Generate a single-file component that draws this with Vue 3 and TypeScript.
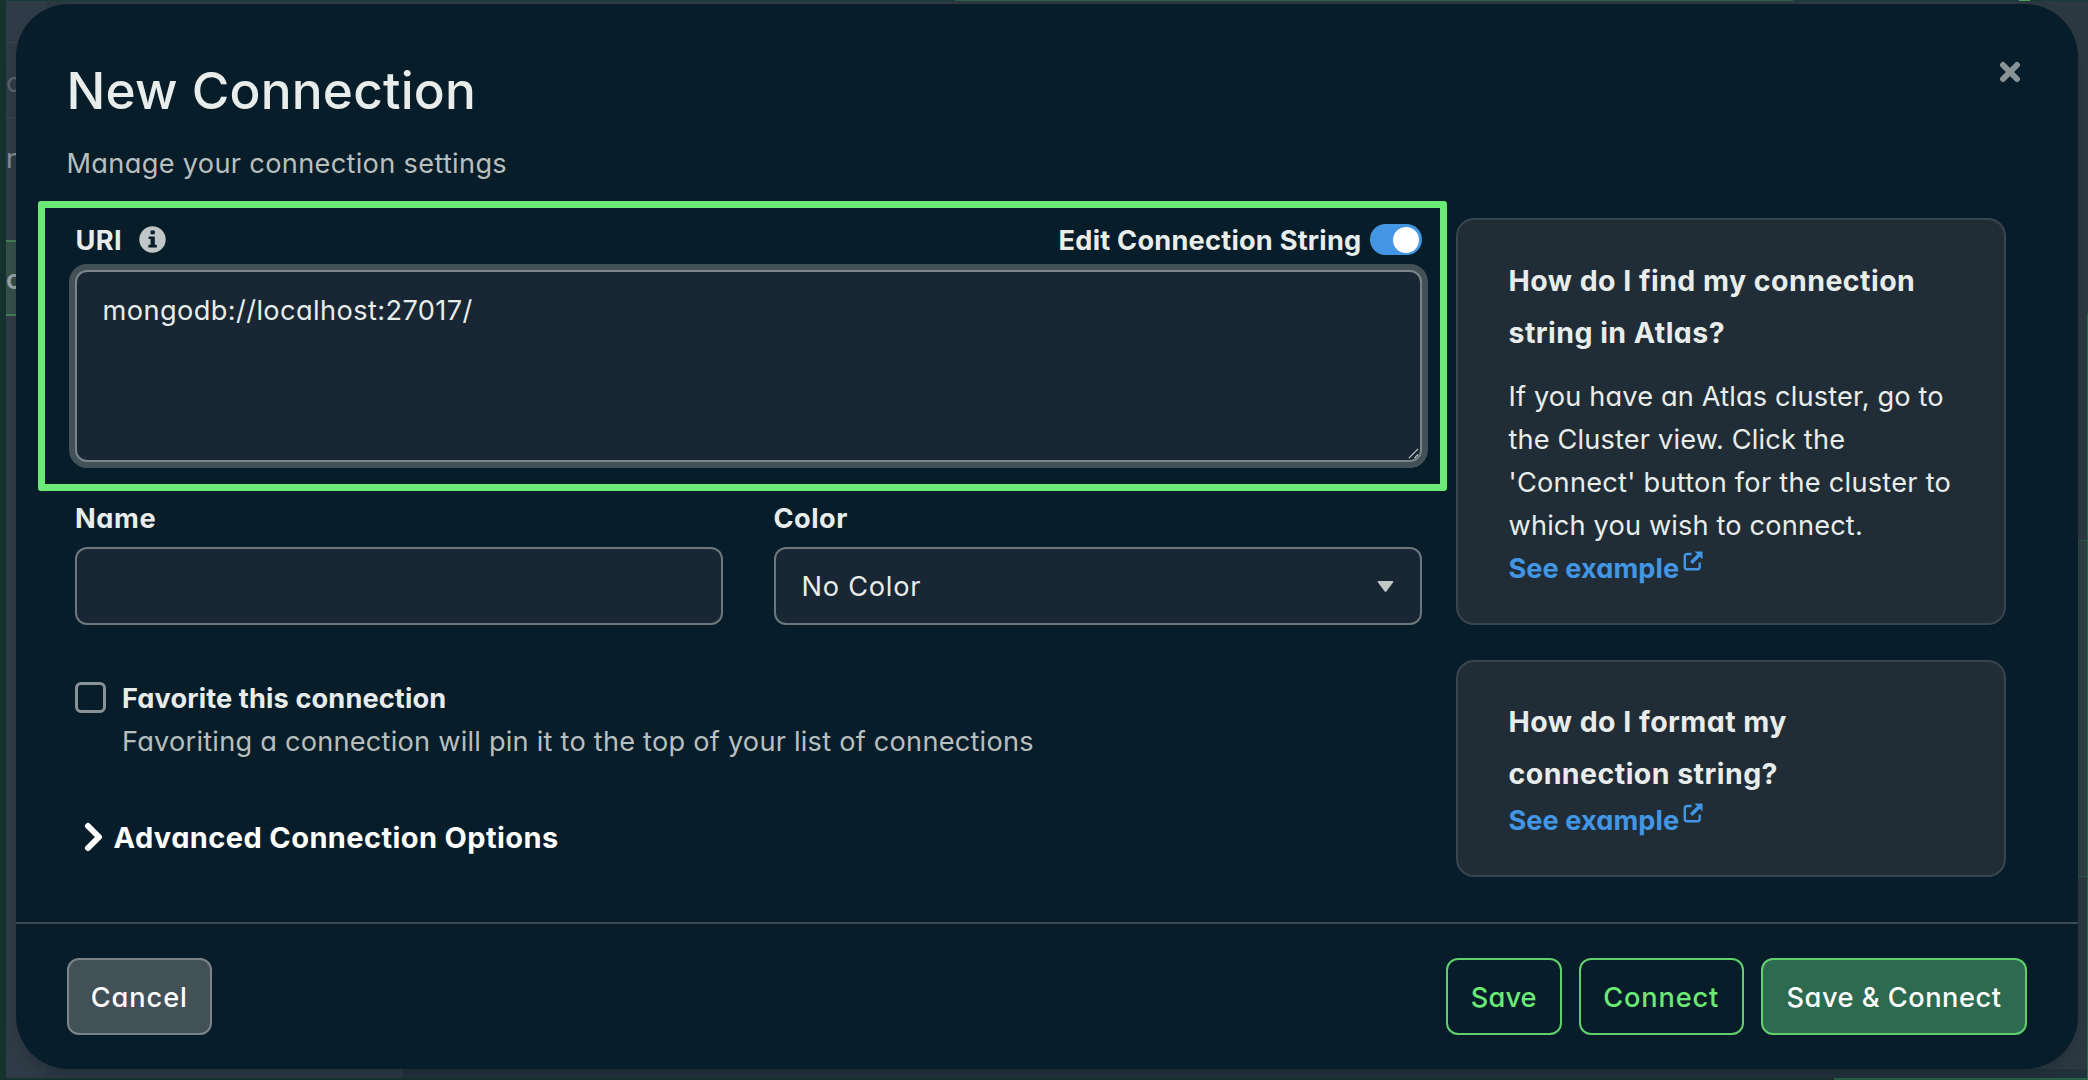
<script setup lang="ts">
const openIcon = {
  frame: 'M8.5 3H4Q1.8 3 1.8 5.2V16Q1.8 18.2 4 18.2H14.5Q16.7 18.2 16.7 16V11.5',
  arrow: 'M11.5 .5H19.5V8.5L16.8 5.8L9.5 13.1L7 10.6L14.3 3.3Z',
}
</script>

<template>
  <div class="screen">
    <div class="backdrop">
      <div class="rail"></div>
      <div class="sidebar">
        <div class="item dim top"></div>
        <div class="item dim">c</div>
        <div class="item mid">n</div>
        <div class="item active">o</div>
      </div>
      <div class="edge top-edge"></div>
      <div class="edge top-green"></div>
      <div class="edge top-mark"></div>
      <div class="edge bottom-shade"></div>
      <div class="edge bottom-edge"></div>
      <div class="edge bottom-green"></div>
      <div class="edge right-panel"></div>
      <div class="edge right-green"></div>
    </div>
    <section class="dialog">
      <header>
        <h1>New Connection</h1>
        <p class="subtitle">Manage your connection settings</p>
        <svg class="close" viewBox="0 0 22 22"><path d="M4 4L18 18M18 4L4 18" /></svg>
      </header>
      <div class="body">
        <div class="form">
          <div class="highlight">
            <div class="uri-row">
              <span class="label uri">URI</span>
              <svg class="info" viewBox="0 0 27 27"><circle cx="13.5" cy="13.5" r="13.2" /><path d="M11.6 4.6h4.2v3.6h-4.2zM9.6 10.4h6.2v8.4h2v2.6H9.4v-2.6h2.2v-5.8h-2z" /></svg>
              <span class="label edit">Edit Connection String</span>
              <span class="toggle"><i></i></span>
            </div>
            <div class="uri-box">mongodb://localhost:27017/
              <svg class="grip" viewBox="0 0 12 12"><path d="M1 11L11 1M7 11L11 7" /></svg>
            </div>
          </div>
          <div class="fields">
            <div class="field">
              <span class="label name">Name</span>
              <div class="input"></div>
            </div>
            <div class="field">
              <span class="label color">Color</span>
              <div class="input"><span class="value">No Color</span><svg class="caret" viewBox="0 0 16 11"><path d="M1 0H15Q16.5 .3 15.5 1.6L9 10.3Q8 11.4 7 10.3L.5 1.6Q-.5 .3 1 0Z" /></svg></div>
            </div>
          </div>
          <div class="favorite">
            <span class="checkbox"></span>
            <div>
              <div class="label fav">Favorite this connection</div>
              <div class="desc">Favoriting a connection will pin it to the top of your list of connections</div>
            </div>
          </div>
          <div class="advanced">
            <svg class="chevron" viewBox="0 0 20 30"><path d="M4 4L15 15L4 26" /></svg>
            <span>Advanced Connection Options</span>
          </div>
        </div>
        <aside>
          <div class="card">
            <h2>How do I find my connection<br />string in Atlas?</h2>
            <p>
              If you have an Atlas cluster, go to<br />the Cluster view. Click the<br /><span class="wide">'Connect' button for the cluster to</span><br />which you wish to connect.
            </p>
            <a><span>See example</span><svg viewBox="0 0 20 20"><path :d="openIcon.frame" /><path class="arrow" :d="openIcon.arrow" /></svg></a>
          </div>
          <div class="card second">
            <h2>How do I format my<br />connection string?</h2>
            <a><span>See example</span><svg viewBox="0 0 20 20"><path :d="openIcon.frame" /><path class="arrow" :d="openIcon.arrow" /></svg></a>
          </div>
        </aside>
      </div>
      <footer>
        <button class="cancel">Cancel</button>
        <button class="save">Save</button>
        <button class="connect">Connect</button>
        <button class="primary">Save &amp; Connect</button>
      </footer>
    </section>
  </div>
</template>

<style>
body { background: #2d3a44; }
</style>
<style scoped>
* { box-sizing: border-box; }
.screen { position: relative; width: 2088px; height: 1080px; overflow: hidden; font-family: Inter, sans-serif; font-feature-settings: "cv11"; color: #e8edeb; font-size: 27.2px; letter-spacing: .15px; }

/* Dimmed application behind the dialog */
.backdrop { position: absolute; inset: 0; display: flex; background: #2c3943; }
.rail { width: 6px; background: #15322f; }
.sidebar { width: 40px; background: #2f3b46; }
.item { height: 75px; line-height: 80px; border-bottom: 1.5px solid #3a4650; color: #56626b; }
.item.top { height: 43px; }
.item.mid { height: 122px; line-height: 82px; color: #858e94; border-bottom: 0; }
.item.active { height: 76px; background: #345048; color: #9aa3a5; border-top: 2px solid #427f58; border-bottom: 2px solid #427f58; font-weight: 600; line-height: 75px; }
.edge { position: absolute; }
.top-edge { left: 6px; right: 0; top: 0; height: 1px; background: #1b3a38; }
.top-green { left: 955px; width: 838px; top: 0; height: 1px; background: #2b6149; }
.top-mark { left: 2019px; width: 11px; top: 0; height: 1px; background: #47a35f; }
.bottom-shade { left: 402px; right: 0; top: 1069px; height: 9px; background: #22323c; }
.bottom-edge { left: 6px; right: 0; top: 1078px; height: 2px; background: #173330; }
.bottom-green { left: 1834px; right: 0; top: 1078px; height: 2px; background: #286048; }
.right-panel { left: 2070px; right: 0; top: 540px; height: 337px; background: #2c4044; border-top: 1.5px solid #2c5548; border-bottom: 1.5px solid #2c5548; }
.right-green { left: 2087px; width: 1px; top: 313px; bottom: 0; background: #2c6a4c; }

.dialog { position: absolute; left: 15.5px; top: 4px; width: 2062.5px; height: 1065px; border-radius: 53px; background: #071d29; display: flex; flex-direction: column; box-shadow: 0 8px 20px -8px rgba(0, 10, 20, .35); }
header { position: relative; padding: 55px 0 0 51px; height: 197px; }
h1 { margin: 0; font-size: 51.3px; line-height: 62px; font-weight: 500; letter-spacing: .22px; }
.subtitle { margin: 22px 0 0; line-height: 41px; color: #b8bfbf; letter-spacing: .31px; }
.close { position: absolute; left: 1983.5px; top: 57px; width: 22px; height: 22px; fill: none; stroke: #889397; stroke-width: 6; stroke-linecap: round; }
.body { display: flex; height: 721px; }
.form { width: 1409px; margin-left: 22.5px; }
.highlight { height: 290px; border: 7px solid #6cea76; border-radius: 3px; padding: 12px 18.5px 0 29.5px; }
.uri-row { display: flex; align-items: center; height: 40px; }
.label { font-weight: 700; line-height: 40px; }
.uri { padding: 1px 0 0 1px; letter-spacing: .4px; }
.info { width: 27px; height: 27px; margin: -1px 0 0 16.5px; fill: #c1c7c6; }
.info path { fill: #071d29; }
.edit { margin-left: auto; padding-top: 1px; letter-spacing: .22px; }
.toggle { width: 52px; height: 31px; border-radius: 16px; margin-left: 8px; margin-top: -1px; background: #4296e4; padding: 2.5px 3px; display: flex; justify-content: flex-end; }
.toggle i { width: 26px; height: 26px; border-radius: 50%; background: #fff; }
.uri-box { position: relative; margin-top: 10px; height: 192px; border: 2px solid #7b8589; border-radius: 12px; background: #182733; box-shadow: 0 0 0 6px #425057; padding: 19px 26px; line-height: 40px; letter-spacing: .4px; }
.grip { position: absolute; right: 1px; bottom: 1px; width: 11px; height: 11px; fill: none; stroke: #c1c7c6; stroke-width: 1.4; }
.fields { display: flex; gap: 51px; margin: 8px 0 0 36.5px; width: 1347px; }
.field { flex: 1; display: flex; flex-direction: column; }
.name { padding-left: .5px; letter-spacing: .6px; }
.color { letter-spacing: .45px; }
.value { letter-spacing: .75px; }
.input { margin-top: 8px; height: 78px; border: 2px solid #6c777c; border-radius: 12px; background: #182733; display: flex; align-items: center; justify-content: space-between; padding: 0 26px; }
.caret { width: 17px; height: 11px; margin-top: 1px; fill: #c1c7c6; }
.favorite { display: flex; margin: 52px 0 0 36.5px; }
.checkbox { width: 31px; height: 31px; border: 3.5px solid #889397; border-radius: 6px; margin: 5px 16.5px 0 0; }
.fav { line-height: 43px; letter-spacing: .12px; }
.desc { line-height: 43px; color: #b8bfbf; letter-spacing: .22px; }
.advanced { display: flex; align-items: center; margin: 54px 0 0 45.5px; height: 40px; font-size: 29px; font-weight: 700; color: #fff; letter-spacing: .4px; }
.chevron { width: 20px; height: 30px; margin-right: 10px; fill: none; stroke: #fff; stroke-width: 6; stroke-linecap: round; stroke-linejoin: round; }
aside { width: 550px; margin: 17px 0 0 8.5px; }
.card { height: 407px; border: 2px solid #38454e; border-radius: 18px; background: #212d36; padding: 35px 0 0 51px; line-height: 43px; white-space: nowrap; }
.second { height: 217px; margin-top: 35px; padding-top: 34px; }
h2 { margin: 0; font-size: 28.5px; font-weight: 700; line-height: 51.5px; letter-spacing: .46px; }
p { margin: 17px 0 0; }
.wide { letter-spacing: .25px; }
a { display: flex; font-weight: 700; color: #4296e4; letter-spacing: .05px; }
a svg { width: 20px; height: 20px; margin: 4px 0 0 4px; fill: none; stroke: #4296e4; stroke-width: 2.4; }
a .arrow { fill: #4296e4; stroke: none; }
footer { flex: 1; border-top: 2px solid #3d4a51; display: flex; padding: 34px 51px 0 51px; gap: 17px; }
button { height: 77px; border: 2px solid #5fd06b; border-radius: 12px; background: none; color: #6cea76; font: inherit; font-feature-settings: inherit; font-weight: 500; padding: 1px 0 0; letter-spacing: .52px; }
.cancel { width: 145.5px; background: #425057; border-color: #7b8589; color: #fff; margin-right: auto; letter-spacing: .9px; }
.save { width: 115.5px; letter-spacing: .1px; }
.connect { width: 165.5px; letter-spacing: .85px; }
.primary { width: 266px; background: #2e6a4f; color: #fff; }
</style>
